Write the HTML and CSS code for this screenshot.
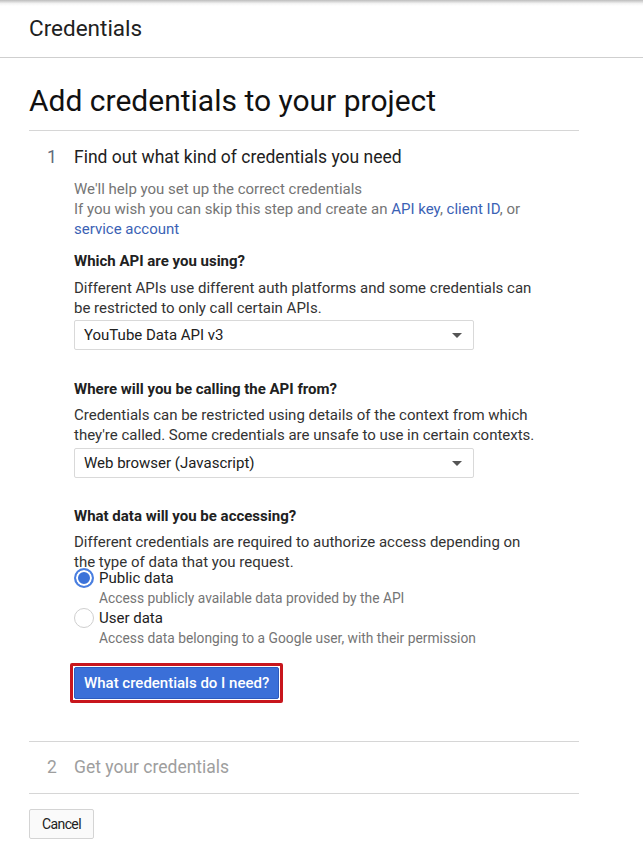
FILE: index.html
```html
<!DOCTYPE html>
<html>
<head>
<meta charset="utf-8">
<link rel="stylesheet" href="styles.css">
</head>
<body>
<div class="topshadow"></div>
<header class="topbar">Credentials</header>
<main class="main">
  <h1 class="title">Add credentials to your project</h1>
  <section class="step">
    <div class="step-head"><span class="step-num">1</span><span class="step-title">Find out what kind of credentials you need</span></div>
    <div class="step-body">
      <p class="intro">We'll help you set up the correct credentials<br>If you wish you can skip this step and create an <a class="link">API key</a>, <a class="link">client ID</a>, or <a class="link">service account</a></p>

      <h3 class="q q1">Which API are you using?</h3>
      <p class="desc d1">Different APIs use different auth platforms and some credentials can be restricted to only call certain APIs.</p>
      <div class="select s1"><span>YouTube Data API v3</span><span class="arrow"></span></div>

      <h3 class="q q2">Where will you be calling the API from?</h3>
      <p class="desc">Credentials can be restricted using details of the context from which they're called. Some credentials are unsafe to use in certain contexts.</p>
      <div class="select s2"><span>Web browser (Javascript)</span><span class="arrow"></span></div>

      <h3 class="q q3">What data will you be accessing?</h3>
      <p class="desc">Different credentials are required to authorize access depending on the type of data that you request.</p>
      <div class="radios">
        <div class="radio-row"><span class="radio checked"></span><div class="radio-text"><div class="radio-label">Public data</div><div class="radio-sub">Access publicly available data provided by the API</div></div></div>
        <div class="radio-row"><span class="radio"></span><div class="radio-text"><div class="radio-label">User data</div><div class="radio-sub">Access data belonging to a Google user, with their permission</div></div></div>
      </div>
      <div class="btn-outline"><button class="primary">What credentials do I need?</button></div>
    </div>
  </section>
  <section class="step step2">
    <div class="step-head"><span class="step-num">2</span><span class="step-title">Get your credentials</span></div>
  </section>
  <button class="cancel">Cancel</button>
</main>
</body>
</html>
```

FILE: styles.css
```css
html, body {
  margin: 0;
  padding: 0;
  background: #fff;
  font-family: Roboto, "Liberation Sans", Arial, sans-serif;
  color: #212121;
}
.topshadow {
  height: 6px;
  background: linear-gradient(#bdbdbd, #f4f4f4 60%, #fff);
}
.topbar {
  height: 52px;
  box-sizing: border-box;
  padding: 7px 0 0 29px;
  font-size: 22.5px;
  line-height: 30px;
  color: #212121;
  border-bottom: 1px solid #cfcfcf;
}
.main {
  width: 550px;
  margin-left: 29px;
}
.title {
  margin: 25px 0 0 0;
  padding-bottom: 11px;
  font-size: 30px;
  line-height: 36px;
  font-weight: 400;
  color: #111;
  border-bottom: 1px solid #d6d6d6;
}
.step {
  border-bottom: 1px solid #d6d6d6;
  padding-bottom: 38px;
}
.step-head {
  display: flex;
  margin-top: 14px;
  font-size: 17.5px;
  line-height: 24px;
}
.step-num {
  width: 18px;
  margin-left: 18px;
  margin-right: 9px;
  color: #5f6b7a;
}
.step-title {
  color: #212121;
}
.step-body {
  padding-left: 45px;
  max-width: 466px;
  font-size: 15px;
  line-height: 20px;
}
.intro {
  margin: 10px 0 0 0;
  color: #757575;
}
.link {
  color: #3b62b5;
  text-decoration: none;
}
.q {
  margin: 0;
  font-size: 15px;
  line-height: 20px;
  font-weight: 700;
  color: #212121;
}
.q1 {
  margin-top: 12px;
}
.q2 {
  margin-top: 29px;
}
.q3 {
  margin-top: 28px;
}
.desc {
  margin: 6px 0 0 0;
  color: #333;
}
.d1 {
  margin-top: 7px;
}
.select {
  box-sizing: border-box;
  width: 400px;
  height: 30px;
  border: 1px solid #d9d9d9;
  border-radius: 2px;
  display: flex;
  align-items: center;
  justify-content: space-between;
  padding: 0 11px 0 9px;
  color: #212121;
}
.s1 {
  margin-top: 2px;
}
.s2 {
  margin-top: 3px;
}
.arrow {
  width: 0;
  height: 0;
  border-left: 5px solid transparent;
  border-right: 5px solid transparent;
  border-top: 5px solid #555;
}
.radios {
  margin-top: -4px;
}
.radio-row {
  display: flex;
}
.radio {
  box-sizing: border-box;
  width: 20px;
  height: 20px;
  border-radius: 50%;
  border: 1px solid #cfcfcf;
  margin-right: 5px;
  flex: none;
}
.radio.checked {
  border: 2px solid #4a7fe0;
  box-shadow: inset 0 0 0 2px #fff;
  background: #3b72d9;
}
.radio-label {
  color: #212121;
}
.radio-sub {
  color: #757575;
  font-size: 13.8px;
}
.btn-outline {
  display: inline-block;
  margin: 15px 0 0 -4px;
  border: 3px solid #c8161d;
  border-radius: 2px;
  padding: 1px;
}
.primary {
  display: block;
  height: 32px;
  padding: 0 9px;
  border: 1px solid #2c5bbf;
  border-radius: 2px;
  background: #3a6fd8;
  color: #fff;
  font-family: Roboto, "Liberation Sans", Arial, sans-serif;
  font-size: 15px;
  font-weight: 500;
}
.step2 {
  padding-bottom: 14px;
}
.step2 .step-head {
  margin-top: 13px;
}
.step2 .step-num, .step2 .step-title {
  color: #9e9e9e;
}
.cancel {
  margin-top: 15px;
  width: 65px;
  height: 30px;
  padding: 0;
  background: #fafafa;
  border: 1px solid #d4d4d4;
  border-radius: 2px;
  font-family: Roboto, "Liberation Sans", Arial, sans-serif;
  font-size: 14px;
  letter-spacing: -0.6px;
  font-weight: 400;
  color: #212121;
}
```
